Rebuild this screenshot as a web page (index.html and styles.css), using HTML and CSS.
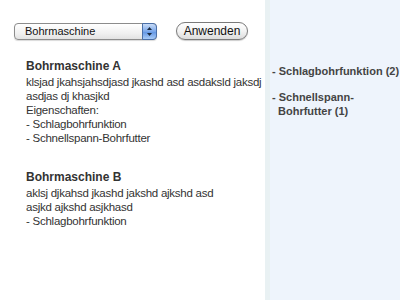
FILE: index.html
```html
<!DOCTYPE html>
<html lang="de">
<head>
  <meta charset="UTF-8" />
  <title>Produktfilter</title>
  <link rel="stylesheet" href="styles.css">
</head>
<body>
  <div class="seite">
    <div class="inhalt">
      <form class="filter">
        <span class="auswahl">
          <select>
            <option>Bohrmaschine</option>
          </select>
          <span class="pfeile">
            <svg width="7" height="11" viewBox="0 0 7 11">
              <path d="M3.5 1 L6 4 L1 4 Z" fill="#1a2a40"/>
              <path d="M3.5 10 L6 7 L1 7 Z" fill="#1a2a40"/>
            </svg>
          </span>
        </span>
        <button type="button" class="anwenden">Anwenden</button>
      </form>

      <div class="produkt">
        <h2>Bohrmaschine A</h2>
        <p>klsjad jkahsjahsdjasd jkashd asd asdaksld jaksdj asdjas dj khasjkd</p>
        <p>Eigenschaften:</p>
        <p>- Schlagbohrfunktion</p>
        <p>- Schnellspann-Bohrfutter</p>
      </div>

      <div class="produkt">
        <h2>Bohrmaschine B</h2>
        <p>aklsj djkahsd jkashd jakshd ajkshd asd<br>asjkd ajkshd asjkhasd</p>
        <p>- Schlagbohrfunktion</p>
      </div>
    </div>

    <div class="seitenleiste">
      <ul class="facetten">
        <li>- Schlagbohrfunktion (2)</li>
        <li>- Schnellspann-<br>Bohrfutter (1)</li>
      </ul>
    </div>
  </div>
</body>
</html>
```

FILE: styles.css
```css
body {
  margin: 0;
  font-family: "Liberation Sans", Arial, sans-serif;
  color: #333;
  background: #fff;
}
.seite {
  display: flex;
  height: 300px;
}
.inhalt {
  width: 265px;
  padding: 22px 0 0 14px;
  box-sizing: border-box;
}
.filter {
  display: flex;
  align-items: center;
  gap: 19px;
  margin: 0 0 19px 0;
}
.auswahl {
  position: relative;
  display: inline-block;
}
.auswahl select {
  appearance: none;
  -webkit-appearance: none;
  width: 143px;
  height: 17px;
  margin: 0;
  padding: 0 0 0 10px;
  border: 1px solid #8c8c8c;
  border-radius: 4px;
  background: linear-gradient(#ffffff, #f1f1f1 60%, #e2e2e2);
  font-family: inherit;
  font-size: 11px;
  color: #111;
  box-shadow: 0 1px 1px rgba(0,0,0,0.15);
  display: block;
}
.pfeile {
  position: absolute;
  top: 0;
  right: 0;
  width: 15px;
  height: 17px;
  box-sizing: border-box;
  border: 1px solid #4a6fa8;
  border-radius: 0 4px 4px 0;
  background: linear-gradient(#c9dcf7, #7aa7ea 50%, #5f93e2 51%, #a8cbf7);
  display: flex;
  align-items: center;
  justify-content: center;
}
.anwenden {
  width: 72px;
  height: 18px;
  padding: 0;
  border: 1px solid #7a7a7a;
  border-radius: 9px;
  background: linear-gradient(#ffffff, #f3f3f3 50%, #dcdcdc);
  font-family: inherit;
  font-size: 12px;
  color: #111;
  box-shadow: 0 1px 1px rgba(0,0,0,0.2);
}
.produkt {
  padding-left: 12px;
  margin-bottom: 25px;
  font-size: 11.5px;
  letter-spacing: -0.25px;
  line-height: 14px;
}
.produkt h2 {
  margin: 0 0 1px 0;
  font-size: 12px;
  letter-spacing: 0;
  line-height: 15px;
  color: #333;
}
.produkt p {
  margin: 0;
}
.seitenleiste {
  flex: 1;
  background: #eef4fc;
  border-left: 5px solid #e9f1f3;
  padding-top: 64px;
}
.facetten {
  list-style: none;
  margin: 0;
  padding: 0 0 0 2px;
  font-size: 11px;
  font-weight: bold;
  line-height: 14px;
  color: #444;
}
.facetten li {
  margin-bottom: 12px;
  padding-left: 6px;
  text-indent: -6px;
}
```
